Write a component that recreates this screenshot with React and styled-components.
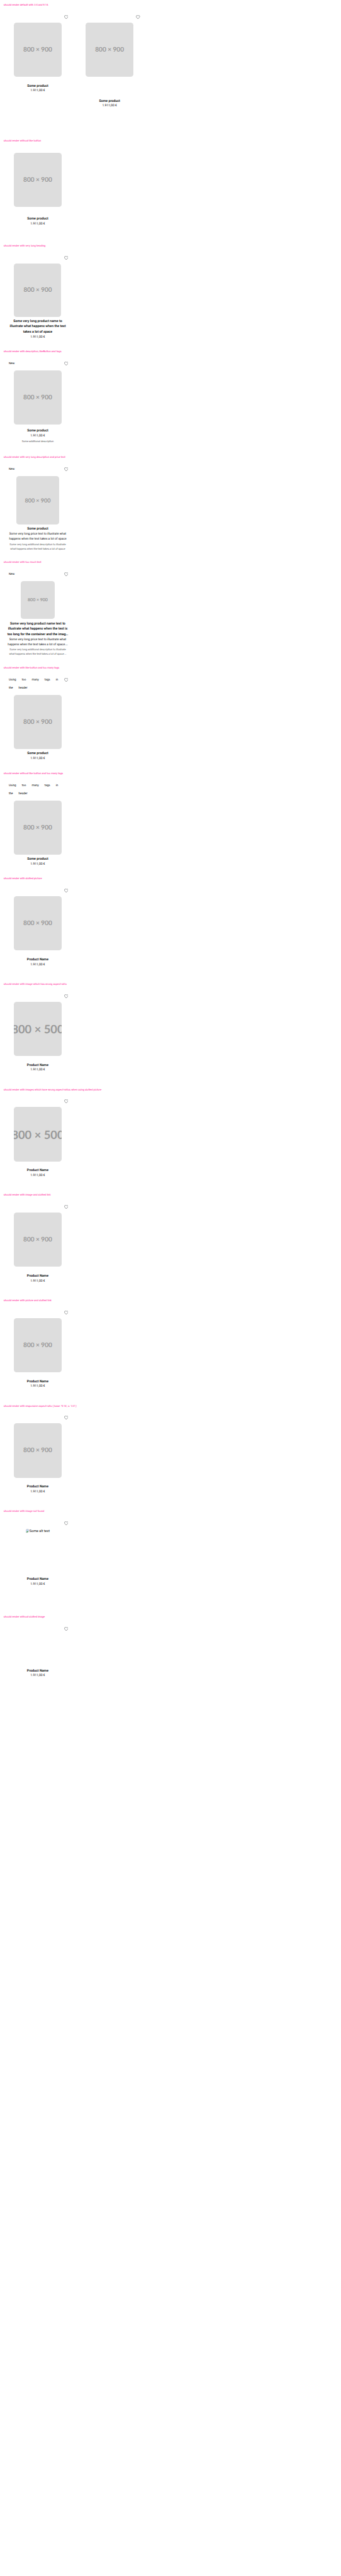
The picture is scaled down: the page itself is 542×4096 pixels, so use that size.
import React from "react";
import styled, { createGlobalStyle } from "styled-components";

// Design units are scaled down to fit the page.
const u = (n) => `${(n * 542) / 750}px`;

const GlobalStyle = createGlobalStyle`
  body {
    margin: 0;
    background: #fff;
    color: #010205;
    font-family: Roboto, "Liberation Sans", sans-serif;
    text-rendering: geometricPrecision;
  }
`;

const Page = styled.main`
  width: 542px;
  height: 4096px;
  overflow: hidden;
`;

const Section = styled.section`
  padding: 0 ${u(8)} ${u(8)};
`;

const Label = styled.h2`
  margin: 0;
  height: ${u(24)};
  font-size: ${u(5.68)};
  font-weight: 400;
  line-height: ${u(24.8)};
  white-space: nowrap;
  color: #ff1493;
`;

const Tiles = styled.div`
  display: flex;
  align-items: flex-start;
  gap: ${u(8)};
`;

const Tile = styled.article`
  display: flex;
  flex-direction: column;
  align-items: center;
  box-sizing: border-box;
  width: ${u(150)};
  height: ${(p) => (p.$tall ? u(266.67) : u(200))};
  padding-bottom: ${u(2.4)};
`;

const Header = styled.header`
  display: flex;
  justify-content: space-between;
  align-items: flex-start;
  flex: none;
  box-sizing: border-box;
  width: 100%;
  min-height: ${(p) => (p.$like ? u(25.4) : u(13.4))};
  padding: 0 ${u(8)} 0 ${u(6.4)};
`;

const Tags = styled.div`
  display: flex;
  flex-wrap: wrap;
  gap: ${u(2.5)};
  width: ${u(122)};
  padding: ${u(6.3)} 0 ${u(6.5)};
`;

const Tag = styled.span`
  padding: 0 ${u(5)};
  font-size: ${u(6.4)};
  line-height: ${u(15.6)};
`;

const Heart = styled.svg`
  flex: none;
  width: ${u(9)};
  height: ${u(9)};
  margin-top: ${u(8.8)};
`;

const Picture = styled.div`
  display: flex;
  align-items: center;
  justify-content: center;
  flex: none;
  overflow: hidden;
  width: ${(p) => u(p.$width)};
  height: ${(p) => u((p.$width * 9) / 8)};
  border-radius: ${u(6)};
  background: #ddd;
  color: #999;
  font-family: Lato, sans-serif;
  font-size: ${(p) => u(p.$width * (p.$wide ? 0.239 : 0.1315))};
  font-weight: 700;
  white-space: nowrap;
`;

const BrokenPicture = styled.div`
  display: flex;
  align-items: flex-start;
  flex: none;
  height: ${u(61)};
  font-size: ${u(7.6)};
  line-height: ${u(12)};
`;

const BrokenIcon = styled.svg`
  width: ${u(8)};
  height: ${u(8.6)};
  margin-top: ${u(0.6)};
`;

const Content = styled.div`
  display: flex;
  flex: 1;
  flex-direction: column;
  justify-content: center;
  text-align: center;
  white-space: nowrap;
`;

const Line = styled.span`
  display: block;
`;

const Title = styled.h3`
  margin: 0;
  font-size: ${u(7.4)};
  font-weight: 600;
  line-height: ${u(12)};
`;

const Price = styled.p`
  margin: 0;
  font-size: ${(p) => u(p.$numeric ? 7 : 6.65)};
  line-height: ${u(11)};
`;

const Description = styled.p`
  margin: 0;
  font-size: ${u(5.65)};
  line-height: ${u(9.7)};
  color: #535457;
`;

const lines = (text) => text.split("\n").map((t) => <Line key={t}>{t}</Line>);

const LikeIcon = () => (
  <Heart viewBox="0 0 18 18" fill="none" stroke="#77787b" strokeWidth="2">
    <path d="M9 16.6 2.4 9.6C.7 7.500.8 4.200 2.700 2.500 4.500 1.100 7.300 1.500 9 3.500c1.700-2 4.500-2.400 6.300-1 1.900 1.700 2 5 .3 7.100Z" />
  </Heart>
);

const MissingImage = () => (
  <BrokenPicture>
    <BrokenIcon viewBox="0 0 15 16">
      <path d="M1 15V6a5 5 0 0 1 5-5h4l4 4v4l-6 6Z" fill="#c5d8f5" stroke="#a5a5a5" />
      <path d="M2 14 7 8l3 3-3 3Z" fill="#4fa345" />
    </BrokenIcon>
    Some alt text
  </BrokenPicture>
);

function ProductTile({
  title = "Product Name",
  price = "1.911,00 €",
  description,
  tags,
  like = true,
  tall,
  image = "800 × 900",
  width = 106,
}) {
  return (
    <Tile $tall={tall}>
      <Header $like={like}>
        {tags ? <Tags>{tags.map((t) => <Tag key={t}>{t}</Tag>)}</Tags> : <span />}
        {like && <LikeIcon />}
      </Header>
      {image === "broken" && <MissingImage />}
      {image && image !== "broken" && (
        <Picture $width={width} $wide={image === "800 × 500"}>{image}</Picture>
      )}
      <Content>
        <Title>{lines(title)}</Title>
        <Price $numeric={/^\d/.test(price)}>{lines(price)}</Price>
        {description && <Description>{lines(description)}</Description>}
      </Content>
    </Tile>
  );
}

const manyTags = ["Using", "too", "many", "tags", "in", "the", "header"];

const stories = [
  ["should render default with 3:4 and 9:16", { title: "Some product" }, { title: "Some product", tall: true }],
  ["should render without like button", { title: "Some product", like: false }],
  [
    "should render with very long heading",
    { title: "Some very long product name to\nillustrate what happens when the text\ntakes a lot of space", width: 103.8 },
  ],
  [
    "should render with description, likeButton and tags",
    { title: "Some product", description: "Some additional description", tags: ["New"] },
  ],
  [
    "should render with very long description and price text",
    {
      title: "Some product",
      price: "Some very long price text to illustrate what\nhappens when the text takes a lot of space",
      description: "Some very long additional description to illustrate\nwhat happens when the text takes a lot of space",
      tags: ["New"],
      width: 95,
    },
  ],
  [
    "should render with too much text",
    {
      title: "Some very long product name text to\nillustrate what happens when the text is\ntoo long for the container and the imag…",
      price: "Some very long price text to illustrate what\nhappens when the text takes a lot of space.…",
      description: "Some very long additional description to illustrate\nwhat happens when the text takes a lot of space.…",
      tags: ["New"],
      width: 74,
    },
  ],
  ["should render with like button and too many tags", { title: "Some product", tags: manyTags }],
  ["should render without like button and too many tags", { title: "Some product", tags: manyTags, like: false }],
  ["should render with slotted picture", {}],
  ["should render with image which has wrong aspect-ratio", { image: "800 × 500" }],
  ["should render with images which have wrong aspect-ratios when using slotted picture", { image: "800 × 500" }],
  ["should render with image and slotted link", {}],
  ["should render with picture and slotted link", {}],
  ["should render with responsive aspect-ratio { base: '9:16', s: '3:4' }", {}],
  ["should render with image not found", { image: "broken" }],
  ["should render without slotted image", { image: null }],
];

export default function App() {
  return (
    <Page>
      <GlobalStyle />
      {stories.map(([label, ...tiles]) => (
        <Section key={label}>
          <Label>{label}</Label>
          <Tiles>
            {tiles.map((tile, i) => (
              <ProductTile key={i} {...tile} />
            ))}
          </Tiles>
        </Section>
      ))}
    </Page>
  );
}
